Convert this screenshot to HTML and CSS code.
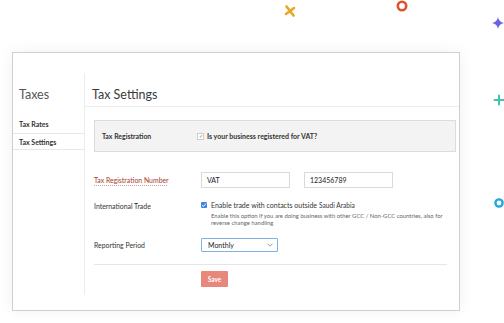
FILE: index.html
```html
<!DOCTYPE html>
<html lang="en">
<head>
  <meta charset="UTF-8" />
  <title>Tax Settings</title>
  <link rel="stylesheet" href="styles.css">
</head>
<body>
  <!-- floating decorations -->
  <svg class="deco deco-x" width="14" height="14" viewBox="0 0 14 14">
    <path d="M3.5 2.5 L10.5 11.5 M11 4 L3 10" stroke="#e8a826" stroke-width="2.6" stroke-linecap="round"/>
  </svg>
  <svg class="deco deco-ring-red" width="14" height="14" viewBox="0 0 14 14">
    <circle cx="7" cy="7" r="4.2" fill="none" stroke="#e0532f" stroke-width="2.6"/>
  </svg>
  <svg class="deco deco-star" width="14" height="14" viewBox="0 0 14 14">
    <path d="M7 1 Q7.8 6.2 13 7 Q7.8 7.8 7 13 Q6.2 7.8 1 7 Q6.2 6.2 7 1 Z" fill="#6b63e0"/>
  </svg>
  <svg class="deco deco-plus" width="12" height="12" viewBox="0 0 12 12">
    <path d="M6 1.5 V10.5 M1.5 6 H10.5" stroke="#3fc4b0" stroke-width="2" stroke-linecap="round"/>
  </svg>
  <svg class="deco deco-ring-blue" width="12" height="12" viewBox="0 0 12 12">
    <circle cx="6" cy="6" r="3.6" fill="none" stroke="#25a8e0" stroke-width="2.4"/>
  </svg>

  <div class="frame">
    <div class="app">
      <aside class="sidebar">
        <div class="side-title">Taxes</div>
        <ul class="side-menu">
          <li>Tax Rates</li>
          <li class="active">Tax Settings</li>
        </ul>
      </aside>

      <main class="main">
        <div class="main-head">Tax Settings</div>
        <div class="content">
          <div class="reg-box">
            <div class="box-label">Tax Registration</div>
            <label class="box-check">
              <span class="tick-gray">&#10003;</span>
              Is your business registered for VAT?
            </label>
          </div>

          <div class="row row-trn">
            <div class="label label-red">Tax Registration Number</div>
            <div class="fields">
              <div class="input">VAT</div>
              <div class="input">123456789</div>
            </div>
          </div>

          <div class="row row-trade">
            <div class="label">International Trade</div>
            <div class="trade">
              <div class="trade-line">
                <span class="tick-blue">
                  <svg width="6" height="6" viewBox="0 0 6 6"><path d="M1 3.2 L2.4 4.5 L5 1.5" fill="none" stroke="#fff" stroke-width="1"/></svg>
                </span>
                Enable trade with contacts outside <span class="country">Saudi Arabia</span>
              </div>
              <p class="help">Enable this option if you are doing business with other GCC / Non-GCC countries, also for reverse change handling</p>
            </div>
          </div>

          <div class="row row-period">
            <div class="label">Reporting Period</div>
            <div class="select">
              Monthly
              <svg width="6" height="4" viewBox="0 0 6 4"><path d="M0.5 0.7 L3 3.2 L5.5 0.7" fill="none" stroke="#888" stroke-width="0.8"/></svg>
            </div>
          </div>

          <div class="actions">
            <button class="save">Save</button>
          </div>
        </div>
      </main>
    </div>
  </div>
</body>
</html>
```

FILE: styles.css
```css
* {
  box-sizing: border-box;
}

body {
  margin: 0;
  background: #fff;
  font-family: Lato, "Open Sans", sans-serif;
  color: #333;
  width: 504px;
  height: 323px;
  overflow: hidden;
  position: relative;
}

.deco {
  position: absolute;
}

.deco-x { left: 283px; top: 4px; }
.deco-ring-red { left: 395px; top: -1px; }
.deco-star { left: 491px; top: 16px; }
.deco-plus { left: 493px; top: 94px; }
.deco-ring-blue { left: 493px; top: 197px; }

.frame {
  margin: 52px 0 0 12px;
  width: 448px;
  height: 259px;
  border: 1px solid #cfcfcf;
  box-shadow: 0 0 14px rgba(0, 0, 0, 0.06);
  padding-top: 20px;
}

.app {
  display: flex;
  height: 222px;
}

.sidebar {
  width: 72px;
  border-right: 1px solid #ececec;
}

.side-title {
  height: 34px;
  padding: 14px 0 0 6px;
  font-size: 12.5px;
  color: #555;
}

.side-menu {
  list-style: none;
  margin: 8px 0 0;
  padding: 0;
}

.side-menu li {
  font-size: 7px;
  font-weight: 700;
  color: #333;
  padding-left: 6px;
  height: 19px;
  line-height: 19px;
  border-bottom: 1px solid #e6e6e6;
}

.side-menu li.active {
  height: 16px;
  line-height: 16px;
}

.main {
  flex: 1;
}

.main-head {
  height: 34px;
  padding: 14px 0 0 7px;
  font-size: 12.5px;
  color: #3a3a3a;
  border-bottom: 1px solid #ededed;
}

.content {
  padding: 13px 3px 0 9px;
}

.reg-box {
  display: flex;
  align-items: center;
  height: 32px;
  background: #f3f3f3;
  border: 1px solid #dcdcdc;
  padding-left: 7px;
}

.box-label {
  width: 95px;
  font-size: 6.9px;
  font-weight: 700;
  color: #333;
}

.box-check {
  display: flex;
  align-items: center;
  gap: 3px;
  font-size: 7px;
  font-weight: 700;
  color: #333;
}

.tick-gray {
  width: 7px;
  height: 7px;
  border: 1px solid #ccc;
  background: #fff;
  color: #999;
  font-size: 5px;
  line-height: 5px;
  text-align: center;
}

.row {
  display: flex;
  align-items: flex-start;
}

.label {
  width: 107px;
  font-size: 6.9px;
  color: #333;
}

.row-trn {
  margin-top: 20px;
  align-items: center;
}

.label-red {
  color: #a8392c;
  text-decoration: underline dotted #c9a49e;
  text-underline-offset: 2px;
}

.fields {
  display: flex;
  gap: 14px;
}

.input {
  width: 89px;
  height: 16px;
  border: 1px solid #dadada;
  padding-left: 5px;
  font-size: 7px;
  line-height: 14px;
  color: #222;
}

.row-trade {
  margin-top: 13px;
}

.row-trade .label {
  padding-top: 1px;
}

.trade-line {
  display: flex;
  align-items: center;
  gap: 4px;
  font-size: 7px;
  color: #333;
  white-space: nowrap;
}

.country {
  margin-left: -2px;
  font-size: 6.6px;
}

.tick-blue {
  width: 6px;
  height: 6px;
  border-radius: 1px;
  background: #3b86e6;
  display: flex;
  align-items: center;
  justify-content: center;
}

.help {
  margin: 3px 0 0 10px;
  width: 240px;
  font-size: 5.9px;
  line-height: 7.2px;
  color: #666;
}

.row-period {
  margin-top: 12px;
  align-items: center;
}

.select {
  width: 77px;
  height: 14px;
  border: 1px solid #7fb0ea;
  border-radius: 1px;
  padding: 0 4px 0 6px;
  display: flex;
  align-items: center;
  justify-content: space-between;
  font-size: 7px;
  color: #222;
}

.actions {
  margin: 12px 9px 0 0;
  border-top: 1px solid #e6e6e6;
  padding: 6px 0 0 107px;
}

.save {
  display: block;
  width: 27px;
  height: 16px;
  border: none;
  border-radius: 1px;
  background: #e8877c;
  color: #fff;
  font-family: Lato, sans-serif;
  font-size: 6.5px;
  font-weight: 700;
  padding: 0;
}
```
